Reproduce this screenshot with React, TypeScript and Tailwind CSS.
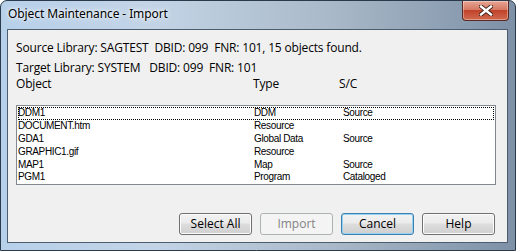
const rows = [
  { name: 'DDM1', type: 'DDM', sc: 'Source' },
  { name: 'DOCUMENT.htm', type: 'Resource', sc: '' },
  { name: 'GDA1', type: 'Global Data', sc: 'Source' },
  { name: 'GRAPHIC1.gif', type: 'Resource', sc: '' },
  { name: 'MAP1', type: 'Map', sc: 'Source' },
  { name: 'PGM1', type: 'Program', sc: 'Cataloged' },
];

function WinButton({
  label,
  variant = 'normal',
}: {
  label: string;
  variant?: 'normal' | 'default' | 'disabled';
}) {
  const look =
    variant === 'disabled'
      ? 'border-[#adb2b5] bg-[#f4f4f4] text-[#838383]'
      : variant === 'default'
        ? 'border-[#3c7fb1] bg-[linear-gradient(#f3f3f3,#ebebeb_45%,#dddddd_50%,#cfcfcf)] text-black shadow-[inset_0_0_0_1px_#97d1f1]'
        : 'border-[#707070] bg-[linear-gradient(#f2f2f2,#ebebeb_45%,#dddddd_50%,#cfcfcf)] text-black shadow-[inset_0_0_0_1px_#fcfcfc]';
  return (
    <div
      className={`flex h-[22px] w-[73px] items-center justify-center rounded-[3px] border text-[12px] ${look}`}
    >
      {label}
    </div>
  );
}

export default function App() {
  return (
    <div className="flex h-[251px] w-[516px] flex-col overflow-hidden rounded-t-[7px] border border-[#2b3a4a] bg-[linear-gradient(90deg,#b7d0ea_0%,#c3d4e6_30%,#a8b8c8_65%,#7d90a6_100%)] font-['Noto_Sans',sans-serif] text-black">
      {/* title bar */}
      <div className="flex h-[28px] items-start justify-between">
        <span className="pl-[7px] pt-[5px] text-[12px] leading-[16px] tracking-[-0.1px] [text-shadow:0_0_6px_#fff,0_0_3px_#fff]">
          Object Maintenance - Import
        </span>
        <div className="mr-[6px] flex h-[20px] w-[47px] items-center justify-center rounded-b-[4px] border border-t-0 border-[#5a2a22] bg-[linear-gradient(#e6a594,#d57a63_45%,#c2432b_50%,#cf6a4f)] shadow-[inset_0_0_0_1px_rgba(255,255,255,0.35)]">
          <svg width="14" height="11" viewBox="0 0 14 11">
            <path
              d="M2 1.5 L12 9.5 M12 1.5 L2 9.5"
              stroke="#3b1d18"
              strokeWidth="4.2"
              strokeLinecap="square"
            />
            <path
              d="M2 1.5 L12 9.5 M12 1.5 L2 9.5"
              stroke="#fff"
              strokeWidth="2.4"
              strokeLinecap="square"
            />
          </svg>
        </div>
      </div>

      {/* client area */}
      <div className="mb-[7px] ml-[6px] mr-[7px] flex flex-1 flex-col border border-[#4c5d6e] bg-[#f0f0f0] pl-[8px] pr-[11px] font-['Open_Sans',sans-serif] text-[12px] leading-[16px] tracking-[-0.17px]">
        <div className="mt-[10px] whitespace-pre">
          Source Library: SAGTEST  DBID: 099  FNR: 101, 15 objects found.
        </div>
        <div className="mt-[4px] whitespace-pre">
          Target Library: SYSTEM   DBID: 099  FNR: 101
        </div>
        <div className="flex">
          <span className="w-[237px]">Object</span>
          <span className="w-[86px]">Type</span>
          <span>S/C</span>
        </div>

        <div className="mt-[13px] h-[80px] w-[480px] border border-[#828790] bg-white px-px py-px font-['Liberation_Sans',sans-serif] text-[10px] tracking-[-0.35px]">
          {rows.map((r, i) => (
            <div
              key={r.name}
              className={`flex h-[12.8px] items-center leading-[12px] ${i === 0 ? 'outline outline-1 -outline-offset-1 outline-dotted outline-black' : ''}`}
            >
              <span className="w-[236px]">{r.name}</span>
              <span className="w-[89px]">{r.type}</span>
              <span>{r.sc}</span>
            </div>
          ))}
        </div>

        <div className="mt-[28px] flex justify-end gap-[8px] pr-[1px] tracking-normal">
          <WinButton label="Select All" />
          <WinButton label="Import" variant="disabled" />
          <WinButton label="Cancel" variant="default" />
          <WinButton label="Help" />
        </div>
      </div>
    </div>
  );
}
